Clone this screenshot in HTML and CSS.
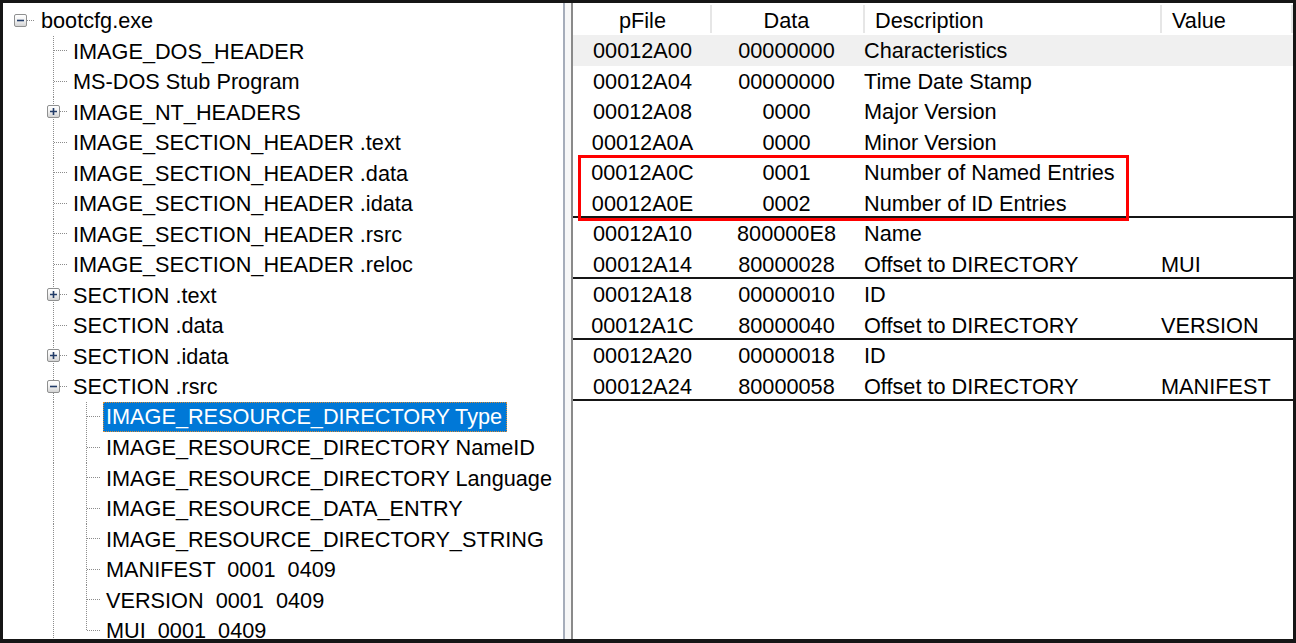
FILE: index.html
```html
<!DOCTYPE html>
<html>
<head>
<meta charset="utf-8">
<title>bootcfg.exe</title>
<link rel="stylesheet" href="styles.css">
</head>
<body>
<div class="window">
  <div class="tree">
    <div class="node"><span class="cell hline"><span class="box"><svg width="11" height="11" viewBox="0 0 11 11"><path d="M2 5.5h7" class="sign"/></svg></span></span><span class="label root-label">bootcfg.exe</span></div>
    <div class="node"><span class="cell"></span><span class="cell tee"></span><span class="label">IMAGE_DOS_HEADER</span></div>
    <div class="node"><span class="cell"></span><span class="cell tee"></span><span class="label">MS-DOS Stub Program</span></div>
    <div class="node"><span class="cell"></span><span class="cell tee"><span class="box"><svg width="11" height="11" viewBox="0 0 11 11"><path d="M2 5.5h7M5.5 2v7" class="sign"/></svg></span></span><span class="label">IMAGE_NT_HEADERS</span></div>
    <div class="node"><span class="cell"></span><span class="cell tee"></span><span class="label">IMAGE_SECTION_HEADER .text</span></div>
    <div class="node"><span class="cell"></span><span class="cell tee"></span><span class="label">IMAGE_SECTION_HEADER .data</span></div>
    <div class="node"><span class="cell"></span><span class="cell tee"></span><span class="label">IMAGE_SECTION_HEADER .idata</span></div>
    <div class="node"><span class="cell"></span><span class="cell tee"></span><span class="label">IMAGE_SECTION_HEADER .rsrc</span></div>
    <div class="node"><span class="cell"></span><span class="cell tee"></span><span class="label">IMAGE_SECTION_HEADER .reloc</span></div>
    <div class="node"><span class="cell"></span><span class="cell tee"><span class="box"><svg width="11" height="11" viewBox="0 0 11 11"><path d="M2 5.5h7M5.5 2v7" class="sign"/></svg></span></span><span class="label">SECTION .text</span></div>
    <div class="node"><span class="cell"></span><span class="cell tee"></span><span class="label">SECTION .data</span></div>
    <div class="node"><span class="cell"></span><span class="cell tee"><span class="box"><svg width="11" height="11" viewBox="0 0 11 11"><path d="M2 5.5h7M5.5 2v7" class="sign"/></svg></span></span><span class="label">SECTION .idata</span></div>
    <div class="node"><span class="cell"></span><span class="cell tee"><span class="box"><svg width="11" height="11" viewBox="0 0 11 11"><path d="M2 5.5h7" class="sign"/></svg></span></span><span class="label">SECTION .rsrc</span></div>
    <div class="node"><span class="cell"></span><span class="cell pipe"></span><span class="cell tee"></span><span class="label sel">IMAGE_RESOURCE_DIRECTORY Type</span></div>
    <div class="node"><span class="cell"></span><span class="cell pipe"></span><span class="cell tee"></span><span class="label">IMAGE_RESOURCE_DIRECTORY NameID</span></div>
    <div class="node"><span class="cell"></span><span class="cell pipe"></span><span class="cell tee"></span><span class="label">IMAGE_RESOURCE_DIRECTORY Language</span></div>
    <div class="node"><span class="cell"></span><span class="cell pipe"></span><span class="cell tee"></span><span class="label">IMAGE_RESOURCE_DATA_ENTRY</span></div>
    <div class="node"><span class="cell"></span><span class="cell pipe"></span><span class="cell tee"></span><span class="label">IMAGE_RESOURCE_DIRECTORY_STRING</span></div>
    <div class="node"><span class="cell"></span><span class="cell pipe"></span><span class="cell tee"></span><span class="label">MANIFEST  0001  0409</span></div>
    <div class="node"><span class="cell"></span><span class="cell pipe"></span><span class="cell tee"></span><span class="label">VERSION  0001  0409</span></div>
    <div class="node"><span class="cell"></span><span class="cell pipe"></span><span class="cell elbow"></span><span class="label">MUI  0001  0409</span></div>
  </div>
  <div class="splitter"></div>
  <div class="list">
    <div class="header">
      <div class="h center">pFile</div>
      <div class="h center sepl">Data</div>
      <div class="h left sepl">Description</div>
      <div class="h left sepl">Value</div>
    </div>
    <div class="row hot"><span class="c">00012A00</span><span class="c">00000000</span><span class="d">Characteristics</span><span class="v"></span></div>
    <div class="row"><span class="c">00012A04</span><span class="c">00000000</span><span class="d">Time Date Stamp</span><span class="v"></span></div>
    <div class="row"><span class="c">00012A08</span><span class="c">0000</span><span class="d">Major Version</span><span class="v"></span></div>
    <div class="row"><span class="c">00012A0A</span><span class="c">0000</span><span class="d">Minor Version</span><span class="v"></span></div>
    <div class="mark">
      <div class="row"><span class="c">00012A0C</span><span class="c">0001</span><span class="d">Number of Named Entries</span><span class="v"></span></div>
      <div class="row sep"><span class="c">00012A0E</span><span class="c">0002</span><span class="d">Number of ID Entries</span><span class="v"></span></div>
    </div>
    <div class="row"><span class="c">00012A10</span><span class="c">800000E8</span><span class="d">Name</span><span class="v"></span></div>
    <div class="row sep"><span class="c">00012A14</span><span class="c">80000028</span><span class="d">Offset to DIRECTORY</span><span class="v">MUI</span></div>
    <div class="row"><span class="c">00012A18</span><span class="c">00000010</span><span class="d">ID</span><span class="v"></span></div>
    <div class="row sep"><span class="c">00012A1C</span><span class="c">80000040</span><span class="d">Offset to DIRECTORY</span><span class="v">VERSION</span></div>
    <div class="row"><span class="c">00012A20</span><span class="c">00000018</span><span class="d">ID</span><span class="v"></span></div>
    <div class="row sep"><span class="c">00012A24</span><span class="c">80000058</span><span class="d">Offset to DIRECTORY</span><span class="v">MANIFEST</span></div>
  </div>
</div>
</body>
</html>
```
FILE: styles.css
```css
* { box-sizing: border-box; }
html, body { margin: 0; padding: 0; background: #fff; }
body {
  font-family: "Liberation Sans", Arial, sans-serif;
  font-size: 21.7px;
  color: #000;
}
.window {
  width: 1296px;
  height: 643px;
  border-style: solid;
  border-color: #161616;
  border-width: 3px 3px 4px 3px;
  display: flex;
  overflow: hidden;
  background: #fff;
}
/* ---------- tree ---------- */
.tree {
  width: 562px;
  flex: none;
  border-right: 2px solid #a6adba;
  padding: 2px 0 0 1px;
  overflow: hidden;
}
.node {
  height: 30.5px;
  display: flex;
  align-items: stretch;
  white-space: pre;
}
.cell {
  width: 33px;
  flex: none;
  display: flex;
  align-items: center;
}
.hline {
  background: repeating-linear-gradient(to right, #8c8c8c 0 1px, transparent 1px 2px) 17px 50% / 14px 1px no-repeat;
}
.pipe {
  background: repeating-linear-gradient(to bottom, #8c8c8c 0 1px, transparent 1px 2px) 16px 0 / 1px 100% no-repeat;
}
.tee {
  background:
    repeating-linear-gradient(to right, #8c8c8c 0 1px, transparent 1px 2px) 17px 50% / 14px 1px no-repeat,
    repeating-linear-gradient(to bottom, #8c8c8c 0 1px, transparent 1px 2px) 16px 0 / 1px 100% no-repeat;
}
.elbow {
  background:
    repeating-linear-gradient(to right, #8c8c8c 0 1px, transparent 1px 2px) 17px 50% / 14px 1px no-repeat,
    repeating-linear-gradient(to bottom, #8c8c8c 0 1px, transparent 1px 2px) 16px 0 / 1px 50% no-repeat;
}
.box {
  width: 13px;
  height: 13px;
  margin-left: 10px;
  border: 1px solid #8f9090;
  border-radius: 2px;
  background: linear-gradient(#ffffff 0%, #f3f3f3 45%, #d4d4d4 100%);
  display: flex;
}
.box svg { display: block; }
.sign { stroke: #223c68; stroke-width: 1.6; fill: none; }
.label {
  display: flex;
  align-items: center;
  padding: 2px 3px 0;
}
.root-label { padding-left: 4px; }
.label.sel {
  background: #0078d7;
  color: #fff;
  border: 1px dotted #d98c35;
  padding: 1px 4px 0 2px;
}
/* ---------- splitter ---------- */
.splitter {
  width: 8px;
  flex: none;
  background: #f7f7f7;
  border-right: 2px solid #8a8a8a;
}
/* ---------- list ---------- */
.list {
  width: 720px;
  flex: none;
  overflow: hidden;
}
.header, .row {
  display: grid;
  grid-template-columns: 135px 153px 297px 131px;
  padding: 0 2px;
}
.header {
  height: 32px;
  background:
    linear-gradient(#e6e6e6, #e6e6e6) right 0 top 2px / 2px 28px no-repeat;
}
.h {
  display: flex;
  align-items: center;
  white-space: nowrap;
  padding-top: 3px;
}
.h.center { justify-content: center; }
.h.left { padding-left: 12px; }
.h.sepl {
  background: linear-gradient(#e6e6e6, #e6e6e6) 0 2px / 2px 28px no-repeat;
}
.row {
  height: 30.5px;
  align-items: center;
  white-space: nowrap;
  padding-top: 2px;
}
.row.hot {
  background: #f0f0f0;
  background-clip: padding-box;
}
.row.sep { box-shadow: inset 0 -2px 0 #151515; }
.c { text-align: center; }
.d { padding-left: 1px; }
.v { padding-left: 1px; }
.mark { position: relative; }
.mark::after {
  content: "";
  position: absolute;
  left: 5px;
  top: -2px;
  width: 545px;
  height: 60px;
  border: 3px solid #f00;
  pointer-events: none;
}
```
